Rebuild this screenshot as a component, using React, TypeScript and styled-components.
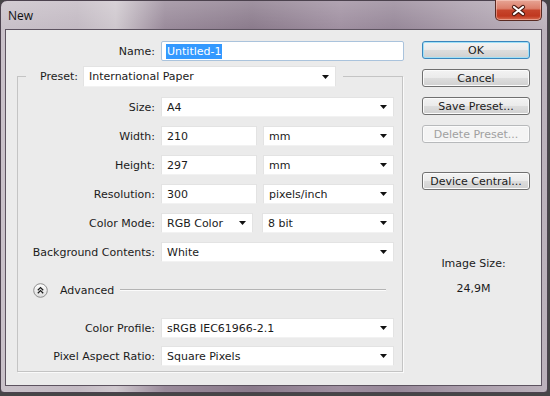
import React from "react";
import styled, { createGlobalStyle } from "styled-components";

const Global = createGlobalStyle`
  html, body { margin: 0; padding: 0; background: #464547; }
  body {
    width: 550px; height: 396px; overflow: hidden;
    font-family: "DejaVu Sans", Verdana, sans-serif;
    font-size: 11px; color: #1b1b1b;
  }
  * { box-sizing: border-box; }
`;

const Frame = styled.div`
  width: 548px;
  height: 393px;
  border: 1px solid #4c424e;
  border-radius: 7px 7px 4px 4px;
  padding: 0 5px 6px 4px;
  display: flex;
  flex-direction: column;
  background:
    linear-gradient(180deg, rgba(255,255,255,0.18) 0px, rgba(255,255,255,0) 28px),
    linear-gradient(90deg, #c9c1c9 0%, #c3bac3 14%, #cfc8ce 21%, #9a8b9b 30%, #8b7b8c 46%, #a090a1 62%, #978899 72%, #aa9dab 85%, #bcb2bc 100%);
`;

const TitleBar = styled.div`
  height: 28px;
  display: flex;
  align-items: flex-start;
  padding-left: 3px;
`;

const Title = styled.span`
  font-family: "Open Sans", "Noto Sans", sans-serif;
  font-size: 12px;
  color: #111;
  line-height: 30px;
`;

const CloseButton = styled.div`
  margin-left: auto;
  margin-top: -1px;
  width: 47px;
  height: 21px;
  border: 1px solid #5a2a22;
  border-top: none;
  border-radius: 0 0 5px 5px;
  background: linear-gradient(180deg, #e7a595 0%, #dc7f6b 42%, #c6442b 52%, #c0381f 80%, #d86e52 100%);
  box-shadow: inset 0 0 0 1px rgba(255, 220, 210, 0.45);
  display: flex;
  align-items: center;
  justify-content: center;
`;

const Client = styled.div`
  flex: 1;
  display: flex;
  border: 1px solid #5d5360;
  background: #ebebeb;
`;

const LeftCol = styled.div`
  width: 399px;
  padding: 11px 0 0 11px;
  display: flex;
  flex-direction: column;
`;

const NameRow = styled.div`
  display: flex;
  align-items: center;
  gap: 6px;
  height: 20px;
`;

const Label = styled.span<{ $w: number }>`
  width: ${(p) => p.$w}px;
  text-align: right;
  white-space: nowrap;
`;

const NameInput = styled.div`
  width: 243px;
  height: 20px;
  background: #fff;
  border: 1px solid #aac3dc;
  border-radius: 2px;
  display: flex;
  align-items: center;
  padding-left: 4px;
`;

const Selected = styled.span`
  background: #3399ff;
  color: #fff;
  padding: 1px 1px;
  line-height: 13px;
`;

const Group = styled.div`
  margin-top: 15px;
  width: 386px;
  border: 1px solid #c4c4c4;
  box-shadow: 1px 1px 0 #fafafa;
  padding: 0 7px 5px 0;
  display: flex;
  flex-direction: column;
`;

const GroupHeader = styled.div`
  width: 317px;
  height: 21px;
  margin: -11px 0 0 8px;
  padding-right: 7px;
  background: #ebebeb;
  display: flex;
  align-items: center;
  justify-content: flex-end;
  gap: 5px;
`;

const Rows = styled.div<{ $gap: number; $top: number }>`
  display: flex;
  flex-direction: column;
  gap: ${(p) => p.$gap}px;
  margin-top: ${(p) => p.$top}px;
`;

const FieldRow = styled.div`
  display: flex;
  align-items: center;
  gap: 6px;
  height: 20px;
`;

const Controls = styled.div<{ $gap: number }>`
  display: flex;
  gap: ${(p) => p.$gap}px;
`;

const Field = styled.div<{ $w: number; $h?: number }>`
  width: ${(p) => p.$w}px;
  height: ${(p) => p.$h ?? 20}px;
  background: #fff;
  border: 1px solid #e3e3e3;
  border-bottom-color: #f2f2f2;
  display: flex;
  align-items: center;
  padding: 0 6px 0 5px;
  white-space: nowrap;
`;

const FieldText = styled.span`
  flex: 1;
  overflow: hidden;
`;

const AdvancedRow = styled.div`
  margin-top: 18px;
  height: 20px;
  display: flex;
  align-items: center;
  padding-left: 15px;
  padding-right: 9px;
`;

const AdvancedText = styled.span`
  margin-left: 12px;
  margin-right: 6px;
`;

const Rule = styled.div`
  flex: 1;
  height: 2px;
  border-top: 1px solid #b4b4b4;
  border-bottom: 1px solid #fbfbfb;
`;

const RightCol = styled.div`
  width: 108px;
  margin-left: 17px;
  padding-top: 11px;
  display: flex;
  flex-direction: column;
`;

const Button = styled.div<{ $variant?: "default" | "disabled"; $top?: number }>`
  height: 18px;
  margin-top: ${(p) => p.$top ?? 10}px;
  border: 1px solid ${(p) => (p.$variant === "default" ? "#3a86bd" : p.$variant === "disabled" ? "#b7b9bb" : "#707070")};
  border-radius: 3px;
  background: ${(p) =>
    p.$variant === "disabled"
      ? "#f4f4f4"
      : "linear-gradient(180deg, #f3f3f3 0%, #ebebeb 48%, #dddddd 52%, #d0d0d0 100%)"};
  box-shadow: inset 0 0 0 1px ${(p) => (p.$variant === "default" ? "#9fe0f7" : p.$variant === "disabled" ? "#fbfbfb" : "#fbfbfb")};
  color: ${(p) => (p.$variant === "disabled" ? "#a0a0a0" : "#1b1b1b")};
  display: flex;
  align-items: center;
  justify-content: center;
  white-space: nowrap;
`;

const Info = styled.div<{ $top: number }>`
  margin-top: ${(p) => p.$top}px;
  padding-right: 5px;
  text-align: center;
  line-height: 14px;
`;

const Arrow = () => (
  <svg width="7" height="4" viewBox="0 0 7 4">
    <path d="M0 0 H7 L3.5 4 Z" fill="#111" />
  </svg>
);

const CloseX = () => (
  <svg width="17" height="13" viewBox="0 0 17 13">
    <path d="M4 3 L13 10 M13 3 L4 10" stroke="#4a1a12" strokeWidth="4.2" strokeLinecap="round" />
    <path d="M4 3 L13 10 M13 3 L4 10" stroke="#ffffff" strokeWidth="2.2" strokeLinecap="round" />
  </svg>
);

const AdvancedIcon = () => (
  <svg width="15" height="15" viewBox="0 0 15 15">
    <defs>
      <linearGradient id="advg" x1="0" y1="0" x2="0" y2="1">
        <stop offset="0" stopColor="#ffffff" />
        <stop offset="1" stopColor="#dcdcdc" />
      </linearGradient>
    </defs>
    <circle cx="7.5" cy="7.5" r="6.8" fill="url(#advg)" stroke="#8e8e8e" strokeWidth="1" />
    <path d="M4.8 7.2 L7.5 4.6 L10.2 7.2 M4.8 10.2 L7.5 7.6 L10.2 10.2" fill="none" stroke="#1e1e1e" strokeWidth="1.3" />
  </svg>
);

const Select = ({ w, h, children }: { w: number; h?: number; children: React.ReactNode }) => (
  <Field $w={w} $h={h}>
    <FieldText>{children}</FieldText>
    <Arrow />
  </Field>
);

const Input = ({ w, children }: { w: number; children: React.ReactNode }) => (
  <Field $w={w}>
    <FieldText>{children}</FieldText>
  </Field>
);

export default function App() {
  return (
    <>
      <Global />
      <Frame>
        <TitleBar>
          <Title>New</Title>
          <CloseButton>
            <CloseX />
          </CloseButton>
        </TitleBar>
        <Client>
          <LeftCol>
            <NameRow>
              <Label $w={138}>Name:</Label>
              <NameInput>
                <Selected>Untitled-1</Selected>
              </NameInput>
            </NameRow>
            <Group>
              <GroupHeader>
                <span>Preset:</span>
                <Select w={253} h={21}>International Paper</Select>
              </GroupHeader>
              <Rows $gap={9} $top={10}>
                <FieldRow>
                  <Label $w={137}>Size:</Label>
                  <Select w={233}>A4</Select>
                </FieldRow>
                <FieldRow>
                  <Label $w={137}>Width:</Label>
                  <Controls $gap={6}>
                    <Input w={96}>210</Input>
                    <Select w={131}>mm</Select>
                  </Controls>
                </FieldRow>
                <FieldRow>
                  <Label $w={137}>Height:</Label>
                  <Controls $gap={6}>
                    <Input w={96}>297</Input>
                    <Select w={131}>mm</Select>
                  </Controls>
                </FieldRow>
                <FieldRow>
                  <Label $w={137}>Resolution:</Label>
                  <Controls $gap={6}>
                    <Input w={96}>300</Input>
                    <Select w={131}>pixels/inch</Select>
                  </Controls>
                </FieldRow>
                <FieldRow>
                  <Label $w={137}>Color Mode:</Label>
                  <Controls $gap={9}>
                    <Select w={92}>RGB Color</Select>
                    <Select w={132}>8 bit</Select>
                  </Controls>
                </FieldRow>
                <FieldRow>
                  <Label $w={137}>Background Contents:</Label>
                  <Select w={233}>White</Select>
                </FieldRow>
              </Rows>
              <AdvancedRow>
                <AdvancedIcon />
                <AdvancedText>Advanced</AdvancedText>
                <Rule />
              </AdvancedRow>
              <Rows $gap={8} $top={18}>
                <FieldRow>
                  <Label $w={137}>Color Profile:</Label>
                  <Select w={233}>sRGB IEC61966-2.1</Select>
                </FieldRow>
                <FieldRow>
                  <Label $w={137}>Pixel Aspect Ratio:</Label>
                  <Select w={233}>Square Pixels</Select>
                </FieldRow>
              </Rows>
            </Group>
          </LeftCol>
          <RightCol>
            <Button $variant="default" $top={0}>OK</Button>
            <Button>Cancel</Button>
            <Button>Save Preset...</Button>
            <Button $variant="disabled">Delete Preset...</Button>
            <Button $top={29}>Device Central...</Button>
            <Info $top={67}>Image Size:</Info>
            <Info $top={11}>24,9M</Info>
          </RightCol>
        </Client>
      </Frame>
    </>
  );
}
